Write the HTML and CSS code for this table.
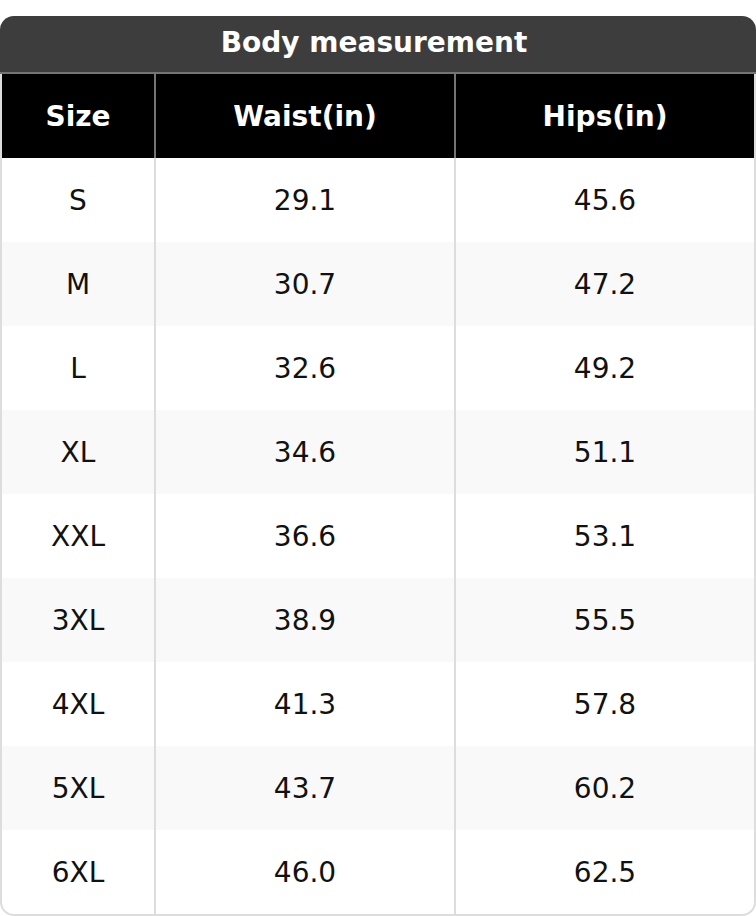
FILE: index.html
```html
<!DOCTYPE html>
<html>
<head>
<meta charset="utf-8">
<link rel="stylesheet" href="styles.css">
</head>
<body>
<div class="card">
  <div class="title">Body measurement</div>
  <div class="table-box">
    <table class="sizes">
      <thead>
        <tr><th class="c1">Size</th><th class="c2">Waist(in)</th><th class="c3">Hips(in)</th></tr>
      </thead>
      <tbody>
        <tr><td>S</td><td>29.1</td><td>45.6</td></tr>
        <tr><td>M</td><td>30.7</td><td>47.2</td></tr>
        <tr><td>L</td><td>32.6</td><td>49.2</td></tr>
        <tr><td>XL</td><td>34.6</td><td>51.1</td></tr>
        <tr><td>XXL</td><td>36.6</td><td>53.1</td></tr>
        <tr><td>3XL</td><td>38.9</td><td>55.5</td></tr>
        <tr><td>4XL</td><td>41.3</td><td>57.8</td></tr>
        <tr><td>5XL</td><td>43.7</td><td>60.2</td></tr>
        <tr><td>6XL</td><td>46.0</td><td>62.5</td></tr>
      </tbody>
    </table>
  </div>
</div>
</body>
</html>
```
FILE: styles.css
```css
html, body {
  margin: 0;
  padding: 0;
  background: #ffffff;
}
body {
  font-family: "DejaVu Sans", sans-serif;
  padding-top: 16px;
}
.card {
  width: 756px;
}
.title {
  height: 54px;
  line-height: 54px;
  padding: 0 8px 2px 0;
  background: #3d3d3d;
  color: #ffffff;
  font-weight: bold;
  font-size: 28px;
  text-align: center;
  border-radius: 14px 14px 0 0;
  border-bottom: 2px solid #747474;
}
.table-box {
  border: 2px solid #dddddd;
  border-top: none;
  border-radius: 0 0 14px 14px;
  overflow: hidden;
}
.sizes {
  width: 752px;
  border-collapse: separate;
  border-spacing: 0;
  table-layout: fixed;
}
.sizes th, .sizes td {
  padding: 0;
  height: 84px;
  text-align: center;
  vertical-align: middle;
  font-size: 28px;
}
.sizes th {
  background: #000000;
  color: #ffffff;
  font-weight: bold;
  border-left: 2px solid #747474;
}
.sizes th.c1 { width: 152px; border-left: none; }
.sizes th.c2 { width: 298px; }
.sizes td {
  color: #111111;
  border-left: 2px solid #dddddd;
}
.sizes td:first-child { border-left: none; }
.sizes tbody tr:nth-child(even) td { background: #f9f9f9; }
```
